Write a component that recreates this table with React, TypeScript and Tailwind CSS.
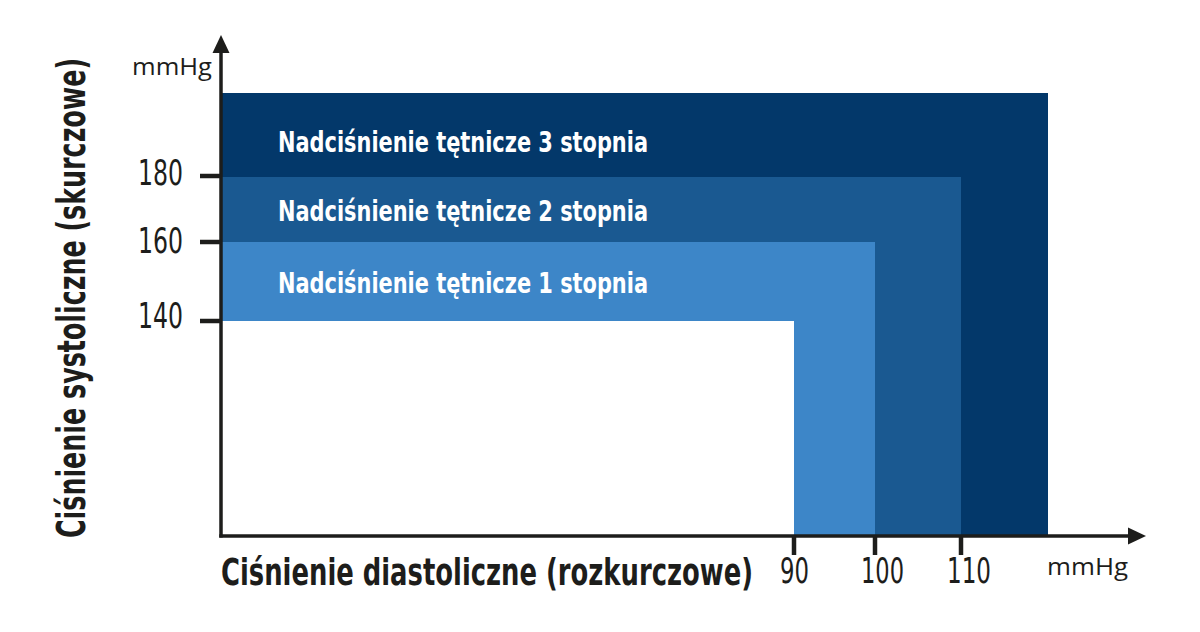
const NARROW = "'Liberation Sans Narrow', 'DejaVu Sans Condensed', 'Open Sans', sans-serif";
const WIDE = "'Open Sans', 'Liberation Sans', sans-serif";
const INK = '#1d1d1b';

// bands: right edge and top edge in px, drawn from the outside in
const BANDS = [
  { right: 1048, top: 93, fill: '#03386a' },
  { right: 961, top: 177, fill: '#1a5991' },
  { right: 875, top: 242, fill: '#3d86c8' },
  { right: 794, top: 321, fill: '#ffffff' },
];

const LABELS = [
  { text: 'Nadciśnienie tętnicze 3 stopnia', y: 152 },
  { text: 'Nadciśnienie tętnicze 2 stopnia', y: 220.5 },
  { text: 'Nadciśnienie tętnicze 1 stopnia', y: 293 },
];

const Y_TICKS = [
  { label: '180', y: 176, base: 185 },
  { label: '160', y: 242, base: 253 },
  { label: '140', y: 321, base: 328 },
];

const X_TICKS = [
  { label: '90', x: 794, start: 780, width: 29 },
  { label: '100', x: 875, start: 861, width: 43 },
  { label: '110', x: 961, start: 947, width: 44 },
];

const ORIGIN_X = 221;
const ORIGIN_Y = 536;

function PressureChart() {
  return (
    <svg width={1200} height={632} viewBox="0 0 1200 632" className="block">
      {BANDS.map((band) => (
        <rect
          key={band.right}
          x={ORIGIN_X}
          y={band.top}
          width={band.right - ORIGIN_X}
          height={ORIGIN_Y - band.top}
          fill={band.fill}
        />
      ))}

      {LABELS.map((label) => (
        <text
          key={label.y}
          x={278}
          y={label.y}
          textLength={370}
          lengthAdjust="spacingAndGlyphs"
          fill="#ffffff"
          fontFamily={NARROW}
          fontWeight={700}
          fontSize={29}
        >
          {label.text}
        </text>
      ))}

      {/* axes */}
      <line x1={ORIGIN_X} y1={48} x2={ORIGIN_X} y2={ORIGIN_Y + 1.5} stroke={INK} strokeWidth={3.5} />
      <polygon points={`${ORIGIN_X},35 ${ORIGIN_X - 8.5},53 ${ORIGIN_X + 8.5},53`} fill={INK} />
      <line x1={ORIGIN_X - 1.75} y1={ORIGIN_Y} x2={1133} y2={ORIGIN_Y} stroke={INK} strokeWidth={3.5} />
      <polygon points={`1146,${ORIGIN_Y} 1128,${ORIGIN_Y - 8.5} 1128,${ORIGIN_Y + 8.5}`} fill={INK} />

      {Y_TICKS.map((tick) => (
        <g key={tick.label}>
          <line x1={200} y1={tick.y} x2={ORIGIN_X} y2={tick.y} stroke={INK} strokeWidth={4.5} />
          <text
            x={138}
            y={tick.base}
            textLength={45}
            lengthAdjust="spacingAndGlyphs"
            fill={INK}
            fontFamily={NARROW}
            fontSize={35}
          >
            {tick.label}
          </text>
        </g>
      ))}

      {X_TICKS.map((tick) => (
        <g key={tick.label}>
          <line x1={tick.x} y1={ORIGIN_Y} x2={tick.x} y2={555} stroke={INK} strokeWidth={4.5} />
          <text
            x={tick.start}
            y={583}
            textLength={tick.width}
            lengthAdjust="spacingAndGlyphs"
            fill={INK}
            fontFamily={NARROW}
            fontSize={35}
          >
            {tick.label}
          </text>
        </g>
      ))}

      <text x={132} y={75} textLength={80} lengthAdjust="spacingAndGlyphs" fill={INK} fontFamily={WIDE} fontSize={23}>
        mmHg
      </text>
      <text x={1047} y={575} textLength={81} lengthAdjust="spacingAndGlyphs" fill={INK} fontFamily={WIDE} fontSize={23}>
        mmHg
      </text>

      <text
        x={221}
        y={585}
        textLength={532}
        lengthAdjust="spacingAndGlyphs"
        fill={INK}
        fontFamily={NARROW}
        fontWeight={700}
        fontSize={38}
      >
        Ciśnienie diastoliczne (rozkurczowe)
      </text>
      <text
        transform="translate(85 538) rotate(-90)"
        x={0}
        y={0}
        textLength={480}
        lengthAdjust="spacingAndGlyphs"
        fill={INK}
        fontFamily={NARROW}
        fontWeight={700}
        fontSize={39}
      >
        Ciśnienie systoliczne (skurczowe)
      </text>
    </svg>
  );
}

export default function App() {
  return (
    <div className="w-[1200px] h-[632px] overflow-hidden bg-white">
      <PressureChart />
    </div>
  );
}
